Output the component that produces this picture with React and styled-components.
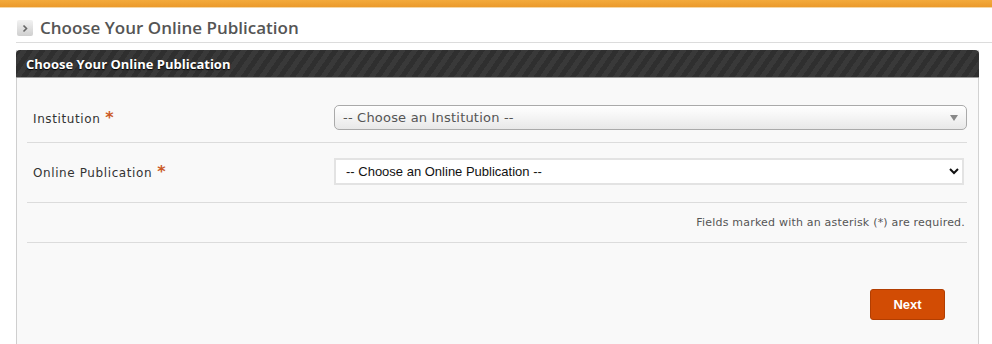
import styled, { createGlobalStyle } from 'styled-components'

const Global = createGlobalStyle`
  html, body { margin: 0; padding: 0; background: #fff; }
  body { font-family: Verdana, "DejaVu Sans", sans-serif; overflow: hidden; }
`

const TopBar = styled.div`
  height: 7px;
  background: linear-gradient(to bottom, #f3aa3c 0%, #eb9a2c 100%);
  border-bottom: 1px solid #f6d7a6;
`

const Page = styled.div`
  padding: 0 13px 0 16px;
`

const PageTitle = styled.h1`
  display: flex;
  align-items: center;
  gap: 7px;
  margin: 0 -13px 0 0;
  padding: 9px 0 3px 1px;
  border-bottom: 1px solid #dcdcdc;
  font-family: "Open Sans", sans-serif;
  font-size: 17px;
  font-weight: 600;
  color: #555;
  line-height: 22px;
`

const TitleIcon = styled.span`
  width: 16px;
  height: 16px;
  border-radius: 2px;
  background: linear-gradient(to bottom, #f2f2f2, #cfcfcf);
  display: flex;
  align-items: center;
  justify-content: center;
`

const Panel = styled.div`
  margin-top: 7px;
  border-right: 1px solid #d2d2d2;
  border-left: 1px solid #cfcfcf;
  background: #f9f9f9;
  min-height: 300px;
`

const PanelHeader = styled.div`
  margin: 0 -1px;
  height: 27px;
  border-radius: 4px 4px 0 0;
  background: repeating-linear-gradient(
    -55deg,
    #2f2f2f 0px,
    #2f2f2f 5px,
    #393939 5px,
    #393939 10px
  );
  border-bottom: 1px solid #9a9a9a;
  padding-left: 10px;
  display: flex;
  align-items: center;
  font-family: "Open Sans", sans-serif;
  font-weight: 700;
  font-size: 13px;
  color: #fff;
  text-shadow: 0 1px 1px #000;
`

const PanelBody = styled.div`
  padding: 11px 11px 0 10px;
`

const Row = styled.div`
  display: flex;
  align-items: center;
  border-bottom: 1px solid #dcdcdc;
  padding: ${p => p.pad};
`

const Label = styled.label`
  width: 301px;
  padding-left: 6px;
  font-size: 12px;
  color: #333;
  font-family: Verdana, "DejaVu Sans", sans-serif;
  letter-spacing: 0.6px;
`

const Star = styled.span`
  color: #cb5a25;
  font-size: 16px;
  font-weight: 700;
  margin-left: 5px;
`

const FancySelect = styled.div`
  flex: 1;
  height: 23px;
  border: 1px solid #aaa;
  border-radius: 5px;
  background: linear-gradient(to bottom, #ffffff 0%, #f4f4f4 50%, #e8e8e8 100%);
  box-shadow: 0 1px 0 #fff inset;
  display: flex;
  align-items: center;
  justify-content: space-between;
  padding: 0 8px 0 8px;
  font-family: Verdana, "DejaVu Sans", sans-serif;
  font-size: 13px;
  letter-spacing: 0.2px;
  color: #555;
`

const Arrow = styled.span`
  width: 0;
  height: 0;
  border-left: 4px solid transparent;
  border-right: 4px solid transparent;
  border-top: 6px solid #888;
`

const NativeSelect = styled.select`
  flex: 1;
  margin-right: 3px;
  height: 27px;
  border: 2px solid #e3e3e3;
  border-radius: 0;
  background: #fff;
  padding: 0 6px;
  font-family: Arial, "Liberation Sans", sans-serif;
  font-size: 13px;
  color: #111;
`

const Note = styled.div`
  flex: 1;
  text-align: right;
  font-size: 11px;
  color: #555;
  letter-spacing: 0.2px;
  padding-right: 2px;
`

const Actions = styled.div`
  display: flex;
  justify-content: flex-end;
  padding: 46px 22px 0 0;
`

const NextButton = styled.button`
  width: 75px;
  height: 31px;
  border: 1px solid #b23e02;
  border-radius: 3px;
  background: #d24c04;
  color: #fff;
  font-family: Arial, "Liberation Sans", sans-serif;
  font-weight: 700;
  font-size: 13px;
  cursor: pointer;
`

export default function App() {
  return (
    <>
      <Global />
      <TopBar />
      <Page>
        <PageTitle>
          <TitleIcon>
            <svg width="8" height="9" viewBox="0 0 8 9">
              <path d="M2.5 1.5 L5.5 4.5 L2.5 7.5" fill="none" stroke="#666" strokeWidth="1.6" />
            </svg>
          </TitleIcon>
          Choose Your Online Publication
        </PageTitle>
        <Panel>
          <PanelHeader>Choose Your Online Publication</PanelHeader>
          <PanelBody>
            <Row pad="16px 0 12px">
              <Label>Institution<Star>*</Star></Label>
              <FancySelect>
                -- Choose an Institution --
                <Arrow />
              </FancySelect>
            </Row>
            <Row pad="15px 0 17px">
              <Label>Online Publication<Star>*</Star></Label>
              <NativeSelect defaultValue="">
                <option value="">-- Choose an Online Publication --</option>
              </NativeSelect>
            </Row>
            <Row pad="13px 0 13px">
              <Note>Fields marked with an asterisk (*) are required.</Note>
            </Row>
            <Actions>
              <NextButton>Next</NextButton>
            </Actions>
          </PanelBody>
        </Panel>
      </Page>
    </>
  )
}
